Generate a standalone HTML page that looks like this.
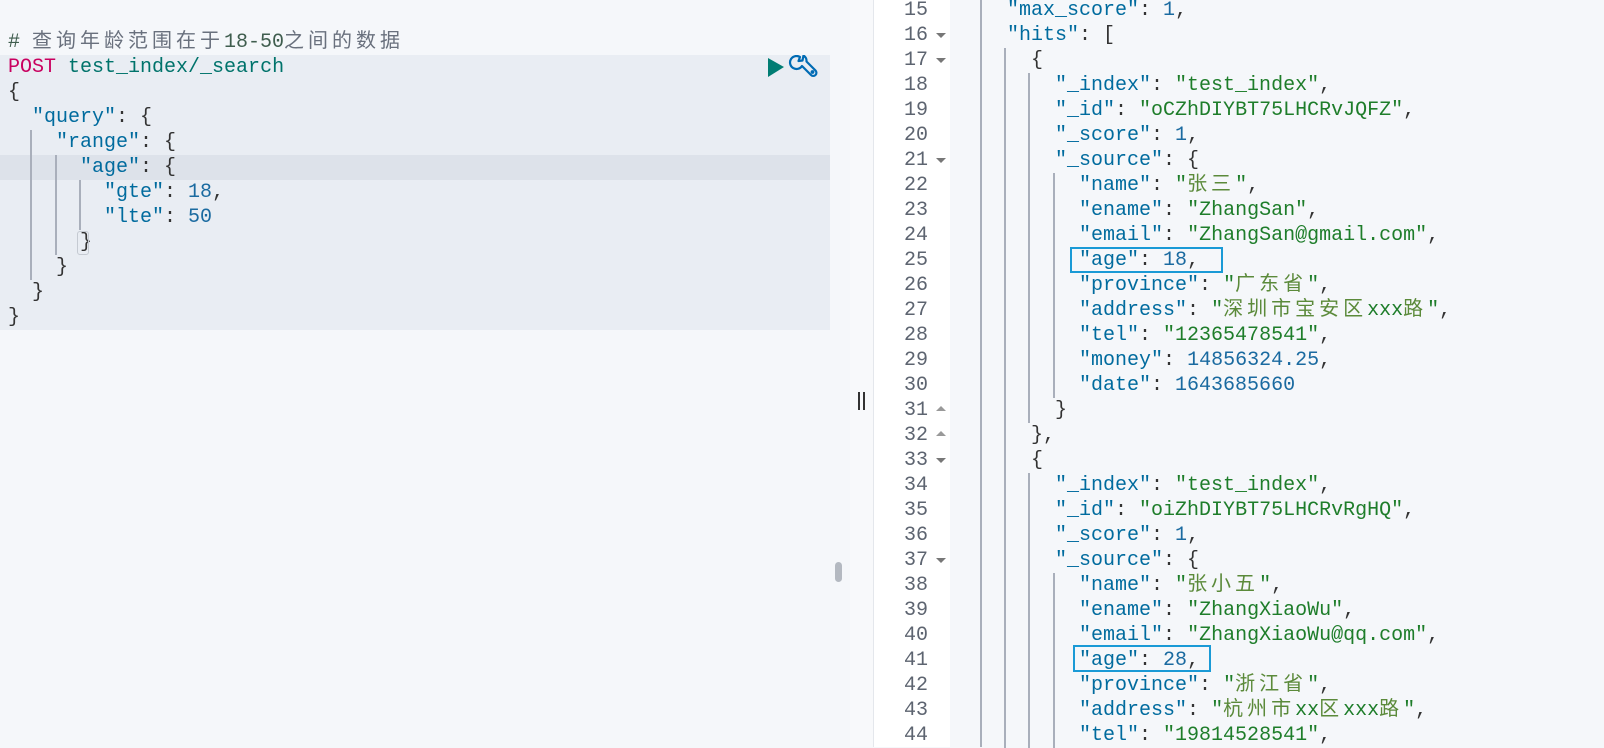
<!DOCTYPE html>
<html><head><meta charset="utf-8"><style>
body{margin:0;width:1604px;height:747px;overflow:hidden;background:#f5f7fa;position:relative;font-family:"Liberation Mono","Noto Sans CJK SC",monospace;font-size:20px}
.a{position:absolute}
.l{position:absolute;height:25px;line-height:25px;white-space:pre}
.k{color:#006b9e}.s{color:#1e7d2a}.n{color:#1a6aa0}.p{color:#333}
.c{letter-spacing:4px;color:#5b8a3a}
.g{position:absolute;width:1.5px;background:#a9afbb}
.ln{position:absolute;left:874px;width:54px;text-align:right;color:#5d6470;height:25px;line-height:25px}
.ar{position:absolute;left:936px;width:0;height:0;border-left:5px solid transparent;border-right:5px solid transparent}
.dn{border-top:5px solid #777}.up{border-bottom:5px solid #999}
</style></head><body>
<div class="a" style="left:0;top:54.5px;width:830px;height:275px;background:#e9edf3"></div>
<div class="a" style="left:0;top:154.5px;width:830px;height:25px;background:#dde2ea"></div>
<div class="a" style="left:850px;top:0;width:23px;height:747px;background:#f8f9fb"></div>
<div class="a" style="left:873px;top:0;width:1px;height:747px;background:#e4e7ec"></div>
<div class="a" style="left:874px;top:0;width:76px;height:747px;background:#fff"></div>

<div class="g" style="left:30px;top:129.5px;height:150px"></div>
<div class="g" style="left:55px;top:154.5px;height:100px"></div>
<div class="g" style="left:79px;top:179.5px;height:50px"></div>

<div class="l" style="left:8px;top:29.5px;color:#69707d"><span style="color:#3f5d4e">#</span> <span class="c" style="color:#69707d">查询年龄范围在于</span><span style="color:#3f5d4e">18-50</span><span class="c" style="color:#69707d">之间的数据</span></div>
<div class="l" style="left:8px;top:54.5px"><span style="color:#c9005f">POST</span> <span style="color:#00736b">test_index/_search</span></div>
<div class="l p" style="left:8px;top:79.5px">{</div>
<div class="l" style="left:8px;top:104.5px"><span class="k">  "query"</span><span class="p">: {</span></div>
<div class="l" style="left:8px;top:129.5px"><span class="k">    "range"</span><span class="p">: {</span></div>
<div class="l" style="left:8px;top:154.5px"><span class="k">      "age"</span><span class="p">: {</span></div>
<div class="l" style="left:8px;top:179.5px"><span class="k">        "gte"</span><span class="p">: </span><span class="n">18</span><span class="p">,</span></div>
<div class="l" style="left:8px;top:204.5px"><span class="k">        "lte"</span><span class="p">: </span><span class="n">50</span></div>
<div class="l p" style="left:8px;top:229.5px">      }</div>
<div class="l p" style="left:8px;top:254.5px">    }</div>
<div class="l p" style="left:8px;top:279.5px">  }</div>
<div class="l p" style="left:8px;top:304.5px">}</div>
<div class="a" style="left:77px;top:231px;width:10px;height:22px;border:1px solid #c5cad2;border-radius:3px"></div>

<svg class="a" style="left:764px;top:55px" width="56" height="28" viewBox="0 0 56 28">
<path d="M4 3 L20 12 L4 22 Z" fill="#017d73"/>
<g fill="none" stroke="#006bb4" stroke-width="2.2" stroke-linecap="round" stroke-linejoin="round">
<path d="M36 2 a6.5 6.5 0 1 0 2 9 l9 9 a3 3 0 0 0 4.5 -4.5 l-9 -9 a6.5 6.5 0 0 0 -3 -6 l-1 5 l-4 0.5 z"/>
<circle cx="48.5" cy="17" r="0.8" fill="#006bb4"/>
</g></svg>

<div class="a" style="left:835px;top:562px;width:7px;height:20px;border-radius:4px;background:#b4b9c1"></div>
<div class="a" style="left:858px;top:392px;width:2px;height:18px;background:#333"></div>
<div class="a" style="left:863px;top:392px;width:2px;height:18px;background:#333"></div>

<div class="g" style="left:980px;top:0;height:747px"></div>
<div class="g" style="left:1004px;top:47.5px;height:700px"></div>
<div class="g" style="left:1028px;top:72.5px;height:350px"></div>
<div class="g" style="left:1053px;top:172.5px;height:225px"></div>
<div class="g" style="left:1028px;top:472.5px;height:275px"></div>
<div class="g" style="left:1053px;top:572.5px;height:175px"></div>

<div class="ln" style="top:-2.5px">15</div><div class="ln" style="top:22.5px">16</div><div class="ln" style="top:47.5px">17</div><div class="ln" style="top:72.5px">18</div><div class="ln" style="top:97.5px">19</div><div class="ln" style="top:122.5px">20</div><div class="ln" style="top:147.5px">21</div><div class="ln" style="top:172.5px">22</div><div class="ln" style="top:197.5px">23</div><div class="ln" style="top:222.5px">24</div><div class="ln" style="top:247.5px">25</div><div class="ln" style="top:272.5px">26</div><div class="ln" style="top:297.5px">27</div><div class="ln" style="top:322.5px">28</div><div class="ln" style="top:347.5px">29</div><div class="ln" style="top:372.5px">30</div><div class="ln" style="top:397.5px">31</div><div class="ln" style="top:422.5px">32</div><div class="ln" style="top:447.5px">33</div><div class="ln" style="top:472.5px">34</div><div class="ln" style="top:497.5px">35</div><div class="ln" style="top:522.5px">36</div><div class="ln" style="top:547.5px">37</div><div class="ln" style="top:572.5px">38</div><div class="ln" style="top:597.5px">39</div><div class="ln" style="top:622.5px">40</div><div class="ln" style="top:647.5px">41</div><div class="ln" style="top:672.5px">42</div><div class="ln" style="top:697.5px">43</div><div class="ln" style="top:722.5px">44</div>
<div class="ar dn" style="top:33px"></div><div class="ar dn" style="top:58px"></div><div class="ar dn" style="top:158px"></div><div class="ar up" style="top:406px"></div><div class="ar up" style="top:431px"></div><div class="ar dn" style="top:458px"></div><div class="ar dn" style="top:558px"></div>

<div class="l" style="left:959px;top:-2.5px"><span class="k">    "max_score"</span><span class="p">: </span><span class="n">1</span><span class="p">,</span></div>
<div class="l" style="left:959px;top:22.5px"><span class="k">    "hits"</span><span class="p">: [</span></div>
<div class="l p" style="left:959px;top:47.5px">      {</div>
<div class="l" style="left:959px;top:72.5px"><span class="k">        "_index"</span><span class="p">: </span><span class="s">"test_index"</span><span class="p">,</span></div>
<div class="l" style="left:959px;top:97.5px"><span class="k">        "_id"</span><span class="p">: </span><span class="s">"oCZhDIYBT75LHCRvJQFZ"</span><span class="p">,</span></div>
<div class="l" style="left:959px;top:122.5px"><span class="k">        "_score"</span><span class="p">: </span><span class="n">1</span><span class="p">,</span></div>
<div class="l" style="left:959px;top:147.5px"><span class="k">        "_source"</span><span class="p">: {</span></div>
<div class="l" style="left:959px;top:172.5px"><span class="k">          "name"</span><span class="p">: </span><span class="s">"<span class="c">张三</span>"</span><span class="p">,</span></div>
<div class="l" style="left:959px;top:197.5px"><span class="k">          "ename"</span><span class="p">: </span><span class="s">"ZhangSan"</span><span class="p">,</span></div>
<div class="l" style="left:959px;top:222.5px"><span class="k">          "email"</span><span class="p">: </span><span class="s">"ZhangSan@gmail.com"</span><span class="p">,</span></div>
<div class="l" style="left:959px;top:247.5px"><span class="k">          "age"</span><span class="p">: </span><span class="n">18</span><span class="p">,</span></div>
<div class="l" style="left:959px;top:272.5px"><span class="k">          "province"</span><span class="p">: </span><span class="s">"<span class="c">广东省</span>"</span><span class="p">,</span></div>
<div class="l" style="left:959px;top:297.5px"><span class="k">          "address"</span><span class="p">: </span><span class="s">"<span class="c">深圳市宝安区</span>xxx<span class="c">路</span>"</span><span class="p">,</span></div>
<div class="l" style="left:959px;top:322.5px"><span class="k">          "tel"</span><span class="p">: </span><span class="s">"12365478541"</span><span class="p">,</span></div>
<div class="l" style="left:959px;top:347.5px"><span class="k">          "money"</span><span class="p">: </span><span class="n">14856324.25</span><span class="p">,</span></div>
<div class="l" style="left:959px;top:372.5px"><span class="k">          "date"</span><span class="p">: </span><span class="n">1643685660</span></div>
<div class="l p" style="left:959px;top:397.5px">        }</div>
<div class="l p" style="left:959px;top:422.5px">      },</div>
<div class="l p" style="left:959px;top:447.5px">      {</div>
<div class="l" style="left:959px;top:472.5px"><span class="k">        "_index"</span><span class="p">: </span><span class="s">"test_index"</span><span class="p">,</span></div>
<div class="l" style="left:959px;top:497.5px"><span class="k">        "_id"</span><span class="p">: </span><span class="s">"oiZhDIYBT75LHCRvRgHQ"</span><span class="p">,</span></div>
<div class="l" style="left:959px;top:522.5px"><span class="k">        "_score"</span><span class="p">: </span><span class="n">1</span><span class="p">,</span></div>
<div class="l" style="left:959px;top:547.5px"><span class="k">        "_source"</span><span class="p">: {</span></div>
<div class="l" style="left:959px;top:572.5px"><span class="k">          "name"</span><span class="p">: </span><span class="s">"<span class="c">张小五</span>"</span><span class="p">,</span></div>
<div class="l" style="left:959px;top:597.5px"><span class="k">          "ename"</span><span class="p">: </span><span class="s">"ZhangXiaoWu"</span><span class="p">,</span></div>
<div class="l" style="left:959px;top:622.5px"><span class="k">          "email"</span><span class="p">: </span><span class="s">"ZhangXiaoWu@qq.com"</span><span class="p">,</span></div>
<div class="l" style="left:959px;top:647.5px"><span class="k">          "age"</span><span class="p">: </span><span class="n">28</span><span class="p">,</span></div>
<div class="l" style="left:959px;top:672.5px"><span class="k">          "province"</span><span class="p">: </span><span class="s">"<span class="c">浙江省</span>"</span><span class="p">,</span></div>
<div class="l" style="left:959px;top:697.5px"><span class="k">          "address"</span><span class="p">: </span><span class="s">"<span class="c">杭州市</span>xx<span class="c">区</span>xxx<span class="c">路</span>"</span><span class="p">,</span></div>
<div class="l" style="left:959px;top:722.5px"><span class="k">          "tel"</span><span class="p">: </span><span class="s">"19814528541"</span><span class="p">,</span></div>

<div class="a" style="left:1070px;top:247px;width:149px;height:22px;border:2px solid #1a9ad6"></div>
<div class="a" style="left:1073px;top:645px;width:134px;height:23px;border:2px solid #1a9ad6"></div>
</body></html>
